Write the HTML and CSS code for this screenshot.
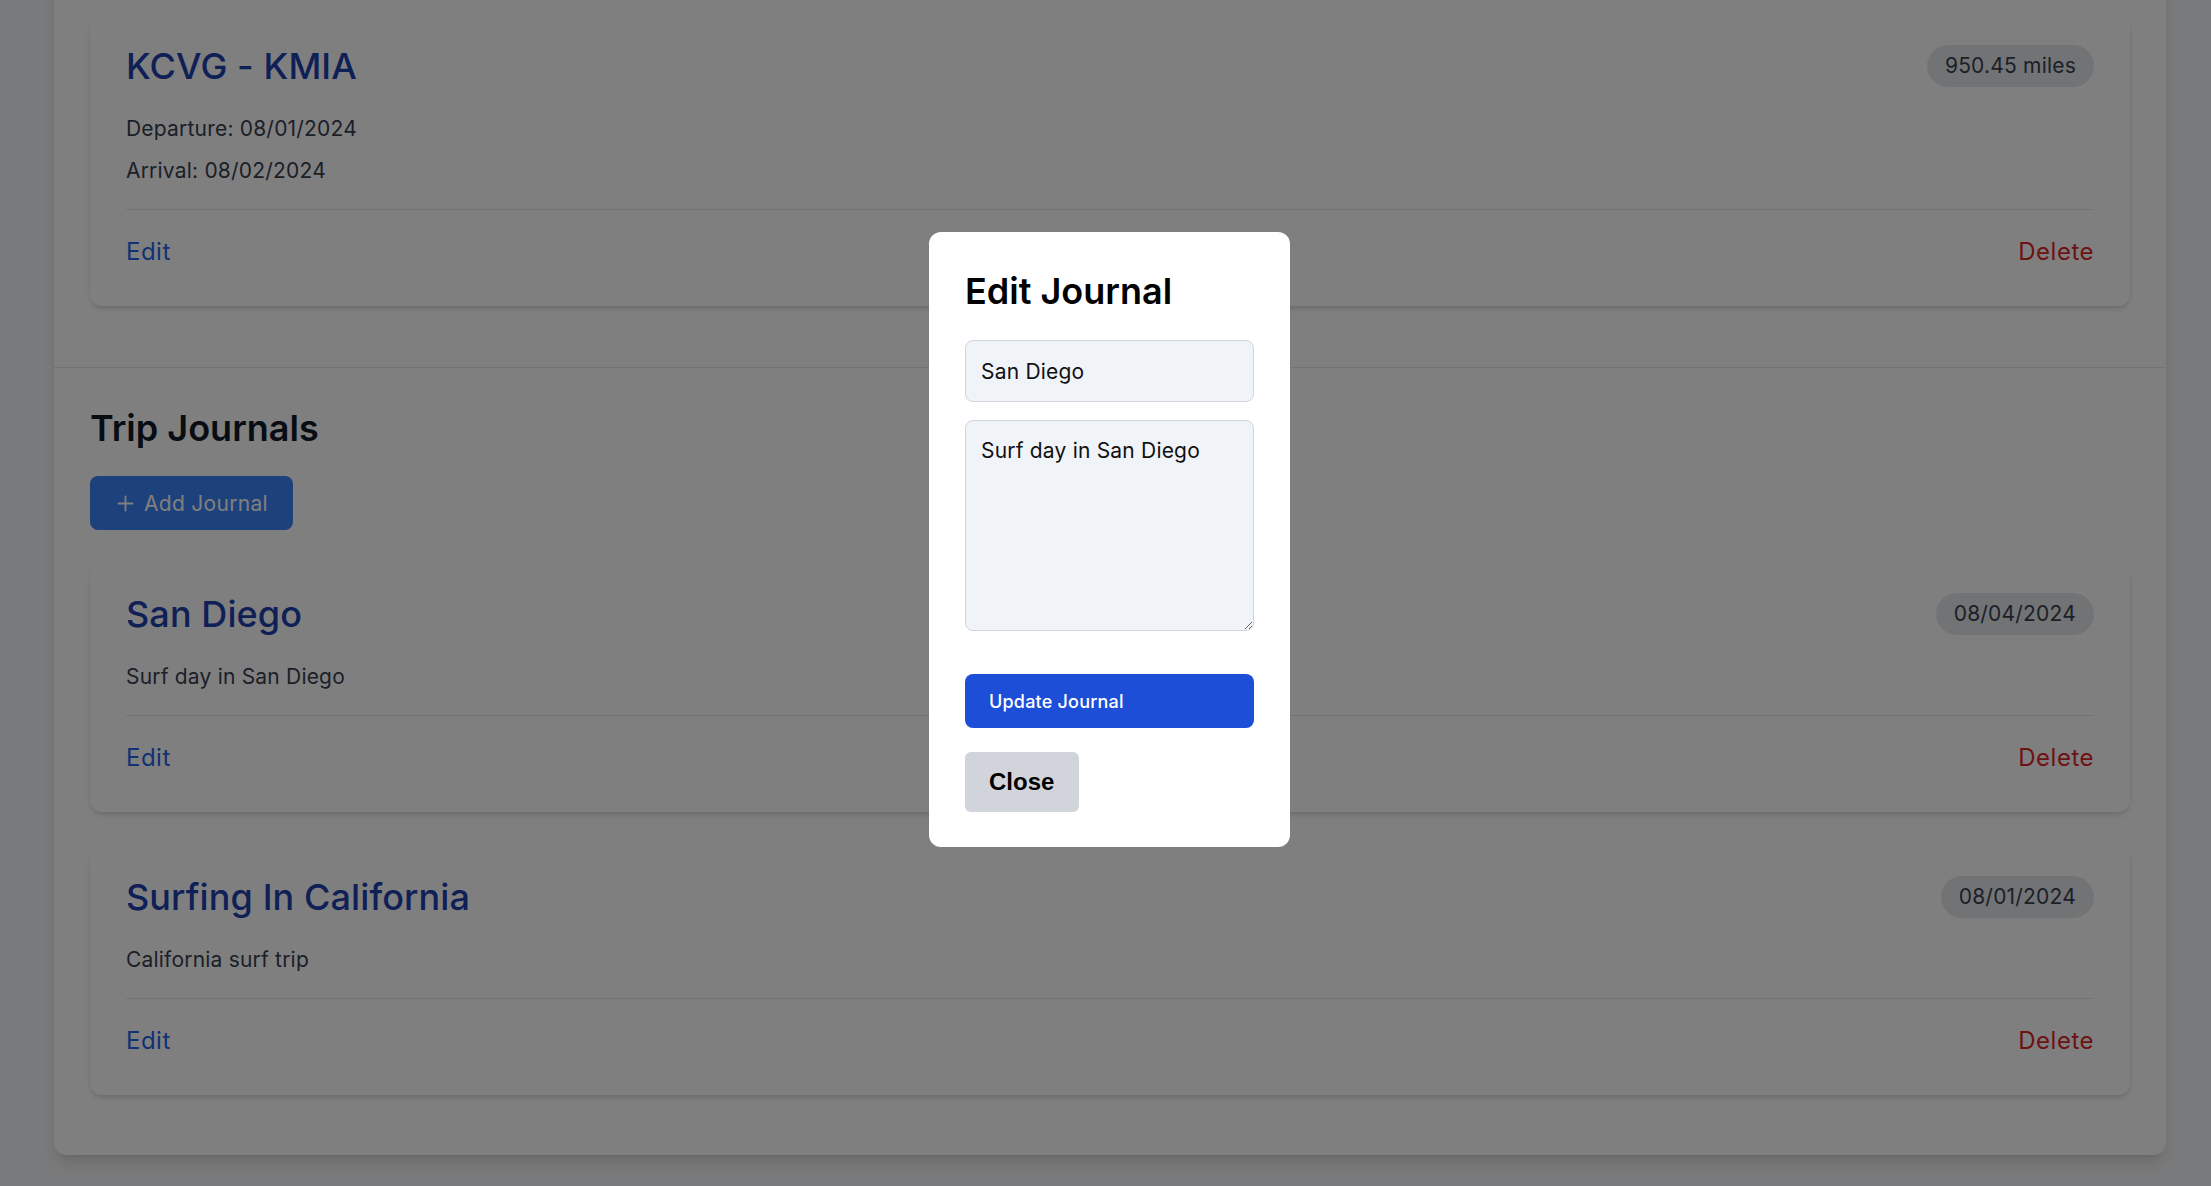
FILE: index.html
```html
<!DOCTYPE html>
<html lang="en">
<head>
<meta charset="utf-8">
<title>Trip</title>
<link rel="stylesheet" href="styles.css">
</head>
<body>
<div class="page">
  <main class="container">
    <section class="flights">
      <article class="card">
        <div class="card-head">
          <h3 class="card-title">KCVG - KMIA</h3>
          <span class="badge">950.45 miles</span>
        </div>
        <div class="card-body">
          <p>Departure: 08/01/2024</p>
          <p>Arrival: 08/02/2024</p>
        </div>
        <div class="card-foot">
          <a class="link-edit">Edit</a>
          <a class="link-delete">Delete</a>
        </div>
      </article>
    </section>
    <section class="journals">
      <h2 class="section-title">Trip Journals</h2>
      <button class="btn-add" type="button">
        <svg class="plus" width="17" height="17" viewBox="0 0 17 17" aria-hidden="true"><path d="M8.5 1.5v14M1.5 8.5h14" stroke="currentColor" stroke-width="1.8" stroke-linecap="round" fill="none"/></svg>
        <span>Add Journal</span>
      </button>
      <div class="card-list">
        <article class="card">
          <div class="card-head">
            <h3 class="card-title">San Diego</h3>
            <span class="badge">08/04/2024</span>
          </div>
          <div class="card-body">
            <p>Surf day in San Diego</p>
          </div>
          <div class="card-foot">
            <a class="link-edit">Edit</a>
            <a class="link-delete">Delete</a>
          </div>
        </article>
        <article class="card">
          <div class="card-head">
            <h3 class="card-title">Surfing In California</h3>
            <span class="badge">08/01/2024</span>
          </div>
          <div class="card-body">
            <p>California surf trip</p>
          </div>
          <div class="card-foot">
            <a class="link-edit">Edit</a>
            <a class="link-delete">Delete</a>
          </div>
        </article>
      </div>
    </section>
  </main>
</div>

<div class="overlay">
  <div class="modal">
    <h3 class="modal-title">Edit Journal</h3>
    <input class="field" type="text" value="San Diego">
    <textarea class="field area">Surf day in San Diego</textarea>
    <button class="btn-update" type="button">Update Journal</button>
    <button class="btn-close" type="button">Close</button>
  </div>
</div>
</body>
</html>
```

FILE: styles.css
```css
* { box-sizing: border-box; }

html, body {
  margin: 0;
  padding: 0;
  height: 100%;
  overflow: hidden;
}

body {
  background: #f3f4f6;
  font-family: Inter, "Open Sans", "Noto Sans", sans-serif;
  color: #374151;
}

.page {
  padding-left: 54px;
}

.container {
  width: 2112px;
  margin-top: -24px;
  background: #ffffff;
  border-radius: 12px;
  box-shadow: 0 10px 15px -3px rgba(0,0,0,0.12), 0 4px 6px -4px rgba(0,0,0,0.1);
}

.flights {
  padding: 38px 36px 61px;
}

.journals {
  border-top: 1px solid #e5e7eb;
  padding: 33px 36px 60px;
}

.section-title {
  margin: 0;
  font-size: 36px;
  line-height: 54px;
  font-weight: 600;
  color: #111827;
}

.btn-add {
  margin-top: 21px;
  height: 54px;
  display: flex;
  align-items: center;
  gap: 10px;
  padding: 0 25px 0 27px;
  border: 0;
  border-radius: 8px;
  background: #3b82f6;
  color: #ffffff;
  font-family: inherit;
  font-size: 21px;
  letter-spacing: 0.3px;
}

.plus { display: block; }

.card-list {
  margin-top: 32px;
  display: flex;
  flex-direction: column;
  gap: 33px;
}

.card {
  background: #ffffff;
  border-radius: 12px;
  padding: 32px 36px 38px;
  box-shadow: 0 4px 6px -1px rgba(0,0,0,0.12), 0 2px 4px -2px rgba(0,0,0,0.1);
}

.card-head {
  display: flex;
  align-items: center;
  justify-content: space-between;
  height: 40px;
}

.card-title {
  margin: 0;
  font-size: 36px;
  line-height: 40px;
  font-weight: 500;
  color: #1e40af;
  letter-spacing: 0.1px;
}

.badge {
  height: 42px;
  line-height: 42px;
  padding: 0 18px;
  border-radius: 999px;
  background: #e5e7eb;
  color: #374151;
  font-size: 21px;
  letter-spacing: 0.2px;
}

.card-body {
  margin-top: 27px;
  padding-bottom: 22px;
  font-size: 21px;
  line-height: 32px;
  color: #374151;
  letter-spacing: 0.2px;
}

.card-body p { margin: 0; }
.card-body p + p { margin-top: 10px; }

.card-foot {
  border-top: 1px solid #e5e7eb;
  padding-top: 26px;
  display: flex;
  justify-content: space-between;
  font-size: 24px;
  line-height: 32px;
  letter-spacing: 0.5px;
}

.link-edit { color: #2563eb; }
.link-delete { color: #dc2626; }

.overlay {
  position: fixed;
  inset: 0;
  background: rgba(0,0,0,0.5);
  display: flex;
  justify-content: center;
  align-items: flex-start;
  padding-top: 232px;
  padding-left: 8px;
}

.modal {
  width: 361px;
  background: #ffffff;
  border-radius: 12px;
  padding: 35px 36px 35px;
}

.modal-title {
  margin: 0;
  font-size: 36px;
  line-height: 48px;
  font-weight: 600;
  color: #000000;
}

.field {
  display: block;
  width: 100%;
  margin: 25px 0 0;
  height: 62px;
  padding: 0 15px;
  border: 1px solid #d1d5db;
  border-radius: 8px;
  background: #f0f3f8;
  font-family: inherit;
  font-size: 21px;
  color: #111111;
  outline: none;
  letter-spacing: 0.2px;
}

.area {
  margin-top: 18px;
  height: 211px;
  padding: 14px 15px;
  line-height: 32px;
}

.btn-update {
  display: block;
  width: 100%;
  margin-top: 43px;
  height: 54px;
  padding: 0 24px;
  border: 0;
  border-radius: 8px;
  background: #1d4ed8;
  color: #ffffff;
  text-align: left;
  font-family: inherit;
  font-size: 18px;
  font-weight: 500;
  letter-spacing: 0.2px;
}

.btn-close {
  display: block;
  margin-top: 24px;
  height: 60px;
  padding: 0 25px 0 24px;
  border: 0;
  border-radius: 6px;
  background: #d1d5db;
  color: #000000;
  font-family: "Liberation Sans", Arial, sans-serif;
  font-size: 24px;
  font-weight: 700;
}
```
